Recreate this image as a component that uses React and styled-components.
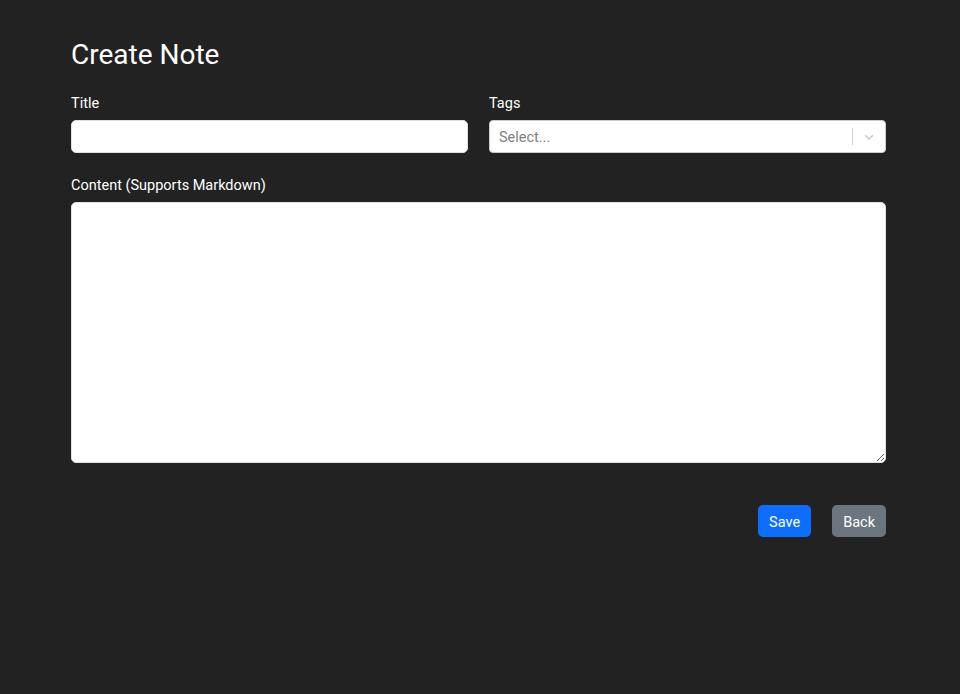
import React from "react";
import styled, { createGlobalStyle } from "styled-components";

const Global = createGlobalStyle`
  html, body { margin: 0; padding: 0; background: #222222; }
  body { font-family: Roboto, "Helvetica Neue", "Liberation Sans", sans-serif; color: #ffffff; }
  * { box-sizing: border-box; }
`;

const Page = styled.div`
  min-height: 694px;
  background: #222222;
  padding: 38px 74px 0 71px;
`;

const Heading = styled.h1`
  margin: 0 0 19px;
  font-size: 28px;
  font-weight: 400;
  line-height: 34px;
`;

const Row = styled.div`
  display: grid;
  grid-template-columns: 1fr 1fr;
  column-gap: 21px;
  margin-bottom: 20px;
`;

const Field = styled.div`
  display: flex;
  flex-direction: column;
`;

const Label = styled.label`
  font-size: 14.5px;
  line-height: 24px;
  padding-top: 1px;
  margin-bottom: 4px;
`;

const Input = styled.input`
  height: 33px;
  border: 1px solid #dee2e6;
  border-radius: 5px;
  background: #fff;
  padding: 0 12px;
  font-size: 15px;
  outline: none;
`;

const Select = styled.div`
  height: 33px;
  border: 1px solid #ccc;
  border-radius: 4px;
  background: #fff;
  display: flex;
  align-items: center;
`;

const Placeholder = styled.span`
  flex: 1;
  padding-left: 9px;
  padding-top: 2px;
  color: #808080;
  font-size: 14.5px;
`;

const Separator = styled.span`
  width: 1px;
  align-self: stretch;
  margin: 7px 0;
  background: #cccccc;
`;

const Indicator = styled.span`
  width: 32px;
  display: flex;
  align-items: center;
  justify-content: center;
  color: #cccccc;
`;

const TextArea = styled.textarea`
  display: block;
  width: 100%;
  height: 261px;
  border: 1px solid #dee2e6;
  border-radius: 5px;
  background: #fff;
  padding: 6px 12px;
  font-size: 15px;
  font-family: inherit;
  outline: none;
`;

const Actions = styled.div`
  display: flex;
  justify-content: flex-end;
  gap: 21px;
  margin-top: 42px;
`;

const Button = styled.button`
  height: 32px;
  padding: 2px 11px 0;
  border: none;
  border-radius: 5px;
  color: #fff;
  font-family: inherit;
  font-size: 14.5px;
  background: ${(p) => (p.$variant === "secondary" ? "#6c757d" : "#0d6efd")};
`;

export default function App() {
  return (
    <>
      <Global />
      <Page>
        <Heading>Create Note</Heading>
        <Row>
          <Field>
            <Label>Title</Label>
            <Input type="text" />
          </Field>
          <Field>
            <Label>Tags</Label>
            <Select>
              <Placeholder>Select...</Placeholder>
              <Separator />
              <Indicator>
                <svg width="14" height="14" viewBox="0 0 20 20" fill="currentColor">
                  <path d="M4.516 7.548c0.436-0.446 1.043-0.481 1.576 0l3.908 3.747 3.908-3.747c0.533-0.481 1.141-0.446 1.574 0 0.436 0.445 0.408 1.197 0 1.615-0.406 0.418-4.695 4.502-4.695 4.502-0.217 0.223-0.502 0.335-0.787 0.335s-0.57-0.112-0.789-0.335c0 0-4.287-4.084-4.695-4.502s-0.436-1.17 0-1.615z" />
                </svg>
              </Indicator>
            </Select>
          </Field>
        </Row>
        <Field>
          <Label>Content (Supports Markdown)</Label>
          <TextArea />
        </Field>
        <Actions>
          <Button>Save</Button>
          <Button $variant="secondary">Back</Button>
        </Actions>
      </Page>
    </>
  );
}
